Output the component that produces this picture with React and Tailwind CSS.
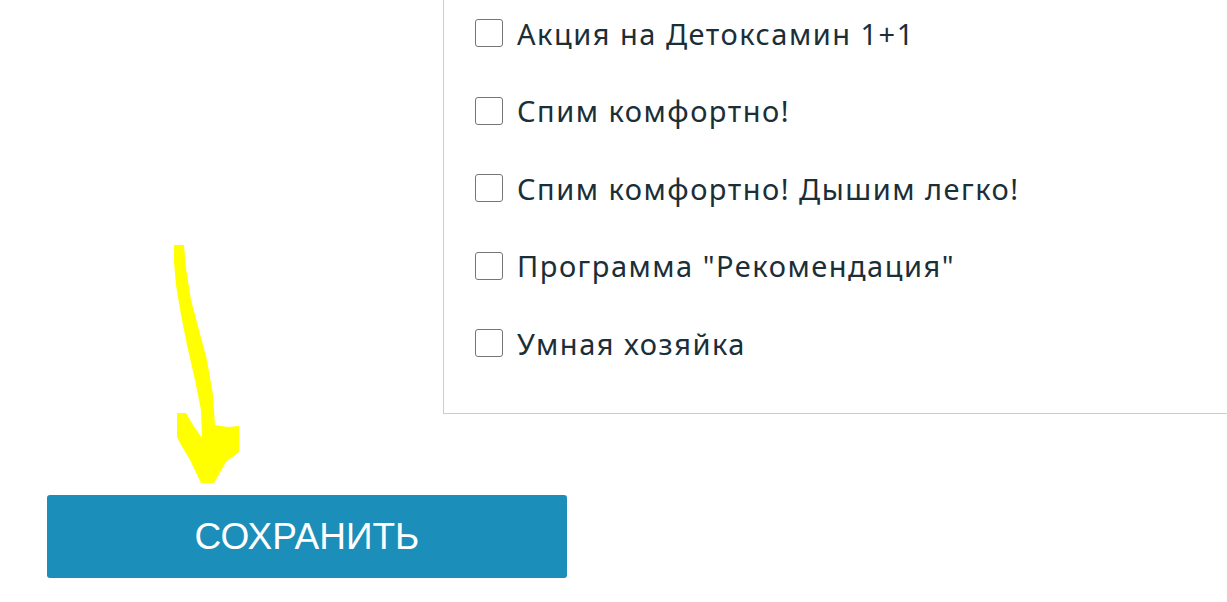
import React from "react";

const promos = [
  "Акция на Детоксамин 1+1",
  "Спим комфортно!",
  "Спим комфортно! Дышим легко!",
  'Программа "Рекомендация"',
  "Умная хозяйка",
];

const Arrow = () => (
  <svg
    className="absolute left-[170px] top-[240px]"
    width="80"
    height="250"
    viewBox="170 240 80 250"
  >
    <path
      fill="#ffff00"
      d="M174 245 L184 245 L186 268 L191 300 L199 330 L207 360 L213 395 L215 425 L228 427 L239 426 L239 452 L226 462 L214 483 L201 483 L190 460 L180 443 L177 437 L177 413 L186 413 L193 425 L202 438 L201 410 L195 380 L187 345 L181 315 L176 285 L174 262 Z"
    />
  </svg>
);

const App = () => {
  return (
    <div className="relative h-[602px] w-[1227px] overflow-hidden bg-white font-['Noto_Sans',sans-serif]">
      <div className="ml-[443px] flex flex-col gap-[49.5px] border-b border-l border-[#cccccc] pb-[56px] pl-[31px] pt-[19px]">
        {promos.map((label) => (
          <label key={label} className="flex h-[28px] items-center gap-[14px]">
            <span className="h-[28px] w-[28px] shrink-0 rounded-[3px] border border-[#767676] bg-white" />
            <span className="whitespace-nowrap text-[29px] leading-none tracking-[1.5px] text-[#1b2f38]">{label}</span>
          </label>
        ))}
      </div>

      <div className="pl-[47px] pt-[81px]">
        <button
          type="button"
          className="flex h-[83px] w-[520px] items-center justify-center rounded-[3px] bg-[#1b8eb9] font-['Liberation_Sans',Arial,sans-serif] text-[37px] text-white"
        >
          СОХРАНИТЬ
        </button>
      </div>

      <Arrow />
    </div>
  );
};

export default App;
